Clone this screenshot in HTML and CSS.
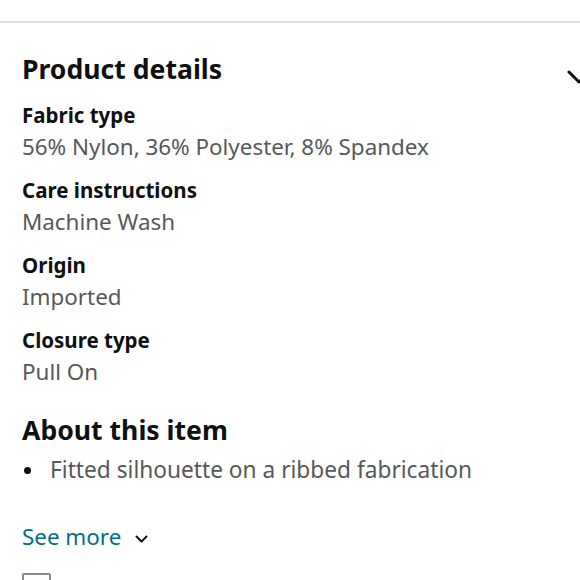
FILE: index.html
```html
<!DOCTYPE html>
<html lang="en">
<head>
<meta charset="utf-8">
<link rel="stylesheet" href="styles.css">
</head>
<body>
<div class="page">
  <div class="divider"></div>
  <section class="details">
    <div class="head-row">
      <h2 class="title">Product details</h2>
      <svg class="chev-big" width="26" height="16" viewBox="0 0 26 16"><path d="M2 2 L12 12 L22 2" fill="none" stroke="#0F1111" stroke-width="3" stroke-linecap="round" stroke-linejoin="round"/></svg>
    </div>
    <div class="facts">
      <div class="fact"><div class="label">Fabric type</div><div class="value">56% Nylon, 36% Polyester, 8% Spandex</div></div>
      <div class="fact"><div class="label">Care instructions</div><div class="value">Machine Wash</div></div>
      <div class="fact"><div class="label">Origin</div><div class="value">Imported</div></div>
      <div class="fact"><div class="label">Closure type</div><div class="value">Pull On</div></div>
    </div>
  </section>
  <section class="about">
    <h2 class="title">About this item</h2>
    <ul class="bullets">
      <li>Fitted silhouette on a ribbed fabrication</li>
    </ul>
    <a class="see-more" href="#">See more
      <svg class="chev-small" width="13" height="8" viewBox="0 0 13 8"><path d="M1.5 1.5 L6.5 6.5 L11.5 1.5" fill="none" stroke="#0F1111" stroke-width="2" stroke-linecap="round" stroke-linejoin="round"/></svg>
    </a>
    <label class="report"><span class="box"></span><span class="report-text">Report an issue with this item or seller</span></label>
  </section>
</div>
</body>
</html>
```
FILE: styles.css
```css
html, body {
  margin: 0;
  padding: 0;
  background: #fff;
  overflow: hidden;
}
body {
  font-family: "Noto Sans", "Open Sans", sans-serif;
  color: #0F1111;
}
.page {
  width: 580px;
  height: 580px;
  overflow: hidden;
}
.divider {
  margin-top: 21px;
  height: 2px;
  background: #dddddd;
}
.details {
  padding: 0 0 0 22px;
}
.head-row {
  display: flex;
  align-items: flex-start;
  justify-content: space-between;
  margin-top: 29px;
}
.title {
  margin: 0;
  font-size: 26.6px;
  line-height: 34px;
  font-weight: 700;
  color: #0F1111;
}
.chev-big {
  margin-right: -13px;
  margin-top: 18px;
  flex: none;
}
.facts {
  display: flex;
  flex-direction: column;
  gap: 13px;
  margin-top: 14px;
}
.label {
  font-size: 20.5px;
  line-height: 31px;
  font-weight: 700;
  color: #0F1111;
}
.value {
  font-size: 22.4px;
  line-height: 31px;
  color: #565959;
}
.about {
  padding-left: 22px;
  margin-top: 26px;
}
.bullets {
  list-style: none;
  margin: 7px 0 0;
  padding: 0;
}
.bullets li {
  position: relative;
  padding-left: 28px;
  font-size: 22.7px;
  line-height: 31px;
  color: #565959;
}
.bullets li::before {
  content: "";
  position: absolute;
  left: 2px;
  top: 13px;
  width: 7px;
  height: 7px;
  border-radius: 50%;
  background: #0F1111;
}
.see-more {
  display: inline-flex;
  align-items: center;
  gap: 14px;
  margin-top: 36px;
  font-size: 22.4px;
  line-height: 31px;
  color: #007185;
  text-decoration: none;
}
.chev-small {
  margin-top: 5px;
}
.report {
  display: flex;
  align-items: flex-start;
  gap: 14px;
  margin-top: 21px;
}
.box {
  flex: none;
  width: 25px;
  height: 25px;
  border: 2px solid #888c8c;
  border-radius: 2px;
}
.report-text {
  font-size: 22.4px;
  line-height: 31px;
  color: #0F1111;
  margin-top: 0;
}
```
